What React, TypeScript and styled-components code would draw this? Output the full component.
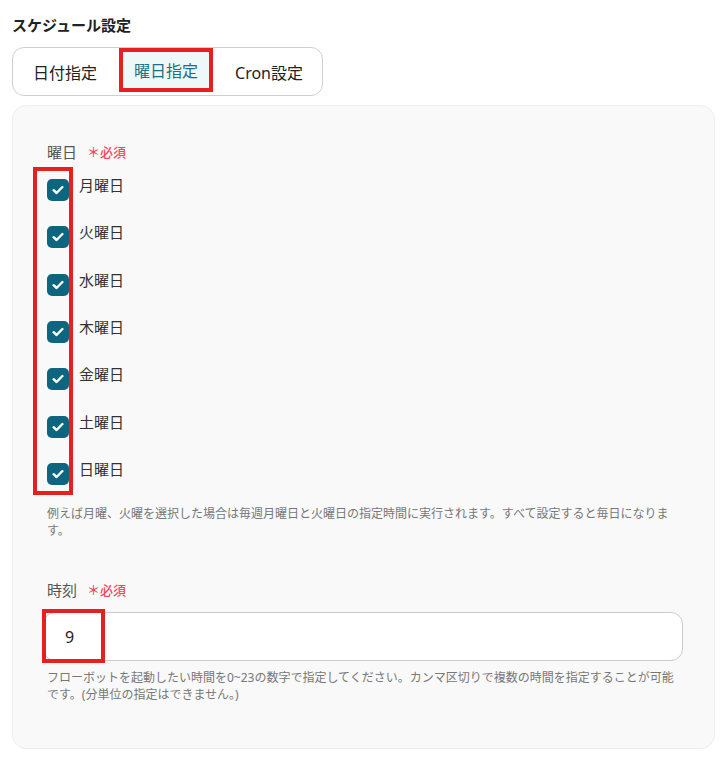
import React, { useState } from "react";
import styled, { createGlobalStyle } from "styled-components";

const GlobalStyle = createGlobalStyle`
  body {
    margin: 0;
    background: #fff;
    font-family: "Noto Sans", "Noto Sans CJK JP", sans-serif;
    color: #333;
  }
`;

const Page = styled.div`
  padding: 14px 11px 8px 12px;
`;
const Title = styled.div`
  font-size: 15px;
  font-weight: 600;
  line-height: 22px;
  color: #222;
  margin-bottom: 11px;
`;
const Segments = styled.div`
  display: inline-flex;
  align-items: center;
  gap: 15px;
  height: 49px;
  box-sizing: border-box;
  padding: 0 8px 0 9px;
  border: 1px solid #cfcfcf;
  border-radius: 12px;
`;
const Segment = styled.div<{ $active?: boolean }>`
  position: relative;
  height: 36px;
  padding: 0 11px;
  display: flex;
  align-items: center;
  font-size: 16px;
  color: ${(p) => (p.$active ? "#1d6f82" : "#222")};
  background: ${(p) => (p.$active ? "#eff8f8" : "transparent")};
  margin-top: ${(p) => (p.$active ? "-4px" : "0")};
`;
const Mark = styled.div`
  position: absolute;
  border: 4px solid #e5201e;
  pointer-events: none;
`;
const SegMark = styled(Mark)`
  inset: -4px -4px -4px -4px;
`;
const Panel = styled.div`
  margin-top: 9px;
  background: #f9f9f9;
  border: 1px solid #eeeeee;
  border-radius: 14px;
  padding: 35px 31px 45px 30px;
`;
const Field = styled.div`
  & + & {
    margin-top: 40px;
  }
`;
const Label = styled.div`
  display: flex;
  align-items: center;
  gap: 10px;
  padding-left: 4px;
  font-size: 15px;
  line-height: 22px;
  color: #555;
`;
const Required = styled.span`
  font-size: 13px;
  font-weight: 500;
  color: #f0485a;
  display: flex;
  align-items: center;
  gap: 2px;
`;
const Days = styled.div`
  position: relative;
  margin-top: 11px;
  padding-left: 4px;
`;
const DaysMark = styled(Mark)`
  left: -10px;
  top: -7px;
  width: 40px;
  height: 328px;
  box-sizing: border-box;
`;
const DayRow = styled.label`
  display: flex;
  align-items: flex-start;
  gap: 10px;
  height: 47.33px;
  font-size: 15px;
  line-height: 22px;
  color: #333;
  cursor: pointer;
`;
const Box = styled.span<{ $on: boolean }>`
  width: 22px;
  height: 22px;
  margin-top: 5px;
  border-radius: 5px;
  background: ${(p) => (p.$on ? "#0e6580" : "#fff")};
  border: ${(p) => (p.$on ? "none" : "1px solid #bbb")};
  display: flex;
  align-items: center;
  justify-content: center;
  box-sizing: border-box;
  flex-shrink: 0;
`;
const Help = styled.div`
  font-size: 12px;
  line-height: 17px;
  color: #777;
  padding-left: 4px;
`;
const InputWrap = styled.div`
  position: relative;
  margin-top: 11px;
`;
const Input = styled.input`
  display: block;
  width: 100%;
  box-sizing: border-box;
  height: 49px;
  border: 1px solid #cccccc;
  border-radius: 12px;
  background: #fff;
  padding: 0 21px;
  font-family: "Noto Sans", "Noto Sans CJK JP", sans-serif;
  font-size: 16px;
  color: #222;
  outline: none;
`;
const InputMark = styled(Mark)`
  left: -1px;
  top: -3px;
  width: 63px;
  height: 54px;
  box-sizing: border-box;
`;
const InputHelp = styled(Help)`
  margin-top: 8px;
`;

const Check = () => (
  <svg width="12" height="10" viewBox="0 0 12 10">
    <path
      d="M1.6 5.2 L4.6 8 L10.4 2"
      fill="none"
      stroke="#fff"
      strokeWidth="2.4"
      strokeLinecap="round"
      strokeLinejoin="round"
    />
  </svg>
);

const dayNames = ["月曜日", "火曜日", "水曜日", "木曜日", "金曜日", "土曜日", "日曜日"];

export default function App() {
  const [days, setDays] = useState<boolean[]>(dayNames.map(() => true));
  const [hour, setHour] = useState("9");

  const toggle = (i: number) =>
    setDays(days.map((d, j) => (j === i ? !d : d)));

  return (
    <Page>
      <GlobalStyle />
      <Title>スケジュール設定</Title>
      <Segments>
        <Segment>日付指定</Segment>
        <Segment $active>
          曜日指定
          <SegMark />
        </Segment>
        <Segment>Cron設定</Segment>
      </Segments>

      <Panel>
        <Field>
          <Label>
            曜日
            <Required>＊必須</Required>
          </Label>
          <Days>
            {dayNames.map((name, i) => (
              <DayRow key={name} onClick={() => toggle(i)}>
                <Box $on={days[i]}>{days[i] && <Check />}</Box>
                {name}
              </DayRow>
            ))}
            <DaysMark />
          </Days>
          <Help>
            例えば月曜、火曜を選択した場合は毎週月曜日と火曜日の指定時間に実行されます。すべて設定すると毎日になります。
          </Help>
        </Field>

        <Field>
          <Label>
            時刻
            <Required>＊必須</Required>
          </Label>
          <InputWrap>
            <Input value={hour} onChange={(e) => setHour(e.target.value)} />
            <InputMark />
          </InputWrap>
          <InputHelp>
            フローボットを起動したい時間を0~23の数字で指定してください。カンマ区切りで複数の時間を指定することが可能です。(分単位の指定はできません。)
          </InputHelp>
        </Field>
      </Panel>
    </Page>
  );
}
